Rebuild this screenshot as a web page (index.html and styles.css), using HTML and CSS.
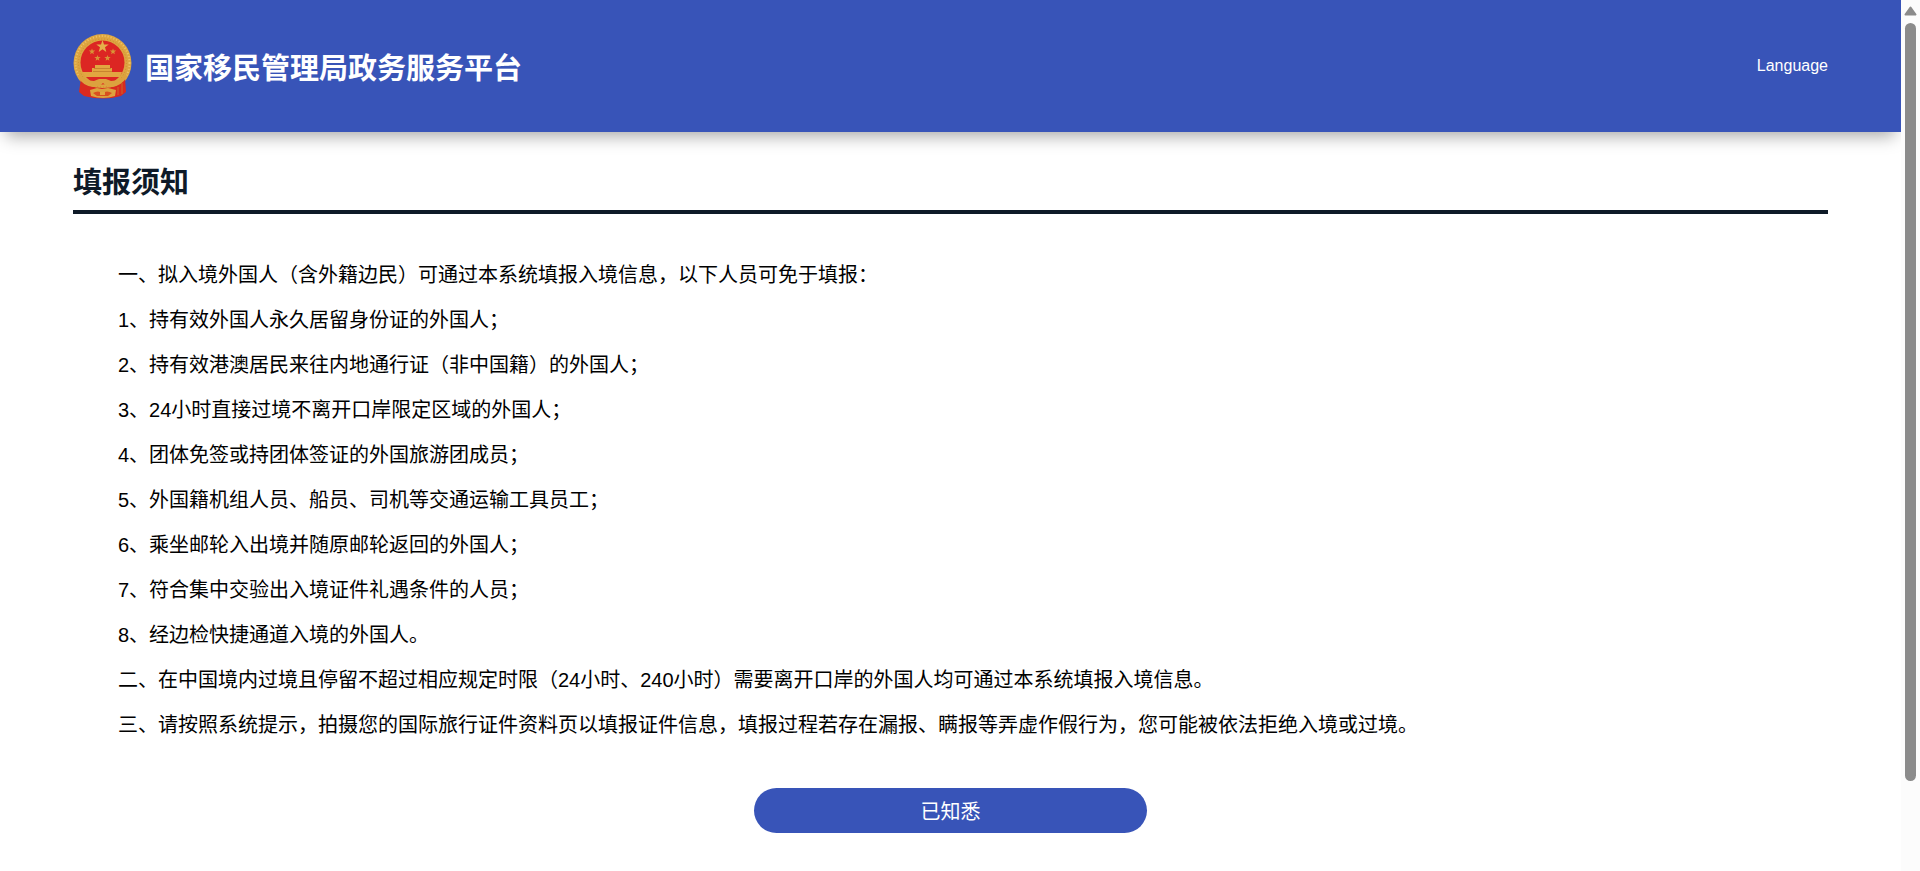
FILE: index.html
```html
<!DOCTYPE html>
<html lang="zh-CN">
  <head>
    <meta charset="UTF-8" />
    <meta name="viewport" content="width=device-width, initial-scale=1.0" />
    <title>国家移民管理局政务服务平台</title>
    <link rel="stylesheet" href="styles.css">
  </head>
  <body>
    <div class="page">
      <header class="header">
        <div class="brand">
          <svg class="emblem" viewBox="0 0 60 66" aria-hidden="true">
            <circle cx="29.500" cy="30" r="29" fill="#dda540"/>
            <circle cx="29.500" cy="30" r="27" fill="none" stroke="#efc568" stroke-width="2" stroke-dasharray="1 2"/>
            <circle cx="29.500" cy="30" r="24" fill="none" stroke="#cc8c30" stroke-width="1" stroke-dasharray="1 2"/>
            <path d="M8 45L6 59L11 63Q30 68 48 63L53 59L52 45Q45 55 30 55Q15 55 8 45Z" fill="#d92a1f"/>
            <path d="M45 54v8M49 50v11" stroke="#c9682a" stroke-width="1"/>
            <circle cx="29.500" cy="29.500" r="22" fill="#dc2623"/>
            <path d="M29.500 7l1.500 4.400h4.700l-3.700 2.900 1.300 4.700-3.800-2.800-3.800 2.800 1.300-4.700-3.700-2.900h4.700z" fill="#e5b04a"/>
            <path d="M19 15.500l.8 2h2.400l-1.900 1.500.6 2.300-1.900-1.300-1.900 1.300.6-2.300-1.900-1.500h2.400zM40 15.500l.8 2h2.400l-1.900 1.500.6 2.300-1.900-1.300-1.900 1.300.6-2.300-1.900-1.500h2.400zM24.500 22l.8 2h2.400l-1.900 1.500.6 2.300-1.900-1.300-1.900 1.300.6-2.300-1.900-1.500h2.400zM34.500 22l.8 2h2.400l-1.900 1.500.6 2.300-1.900-1.300-1.900 1.300.6-2.300-1.900-1.500h2.400z" fill="#d99436"/>
            <path d="M22 32h15v3h2v4h10l-2 5H12l-3-5h10v-4h3z" fill="#e2a640"/>
            <path d="M21 35.500h17M20 38.500h19" stroke="#c8842f" stroke-width="1"/>
            <path d="M6 40q5 8 15 8l5-2h7l5 2q10 0 15-8l1 4q-6 9-15 10-5 0-9-4-4 4-10 4-10-1-15-10z" fill="#dca23e"/>
            <path d="M17 57l7-2 5 1 6-1 8 2-1 6q-12 4-24 0z" fill="#dca23e"/>
            <path d="M20 60q5-3 9.500 0 4.500-3 9.500 0l-4 3h-11z" fill="#d9501f"/>
            <path d="M27 59h5v3h-5z" fill="#e2a640"/>
          </svg>
          <span class="brand-name">国家移民管理局政务服务平台</span>
        </div>
        <a class="language" href="#">Language</a>
      </header>
      <main class="content">
        <h1 class="title">填报须知</h1>
        <div class="notice">
          <p>一、拟入境外国人（含外籍边民）可通过本系统填报入境信息，以下人员可免于填报：</p>
          <p>1、持有效外国人永久居留身份证的外国人；</p>
          <p>2、持有效港澳居民来往内地通行证（非中国籍）的外国人；</p>
          <p>3、24小时直接过境不离开口岸限定区域的外国人；</p>
          <p>4、团体免签或持团体签证的外国旅游团成员；</p>
          <p>5、外国籍机组人员、船员、司机等交通运输工具员工；</p>
          <p>6、乘坐邮轮入出境并随原邮轮返回的外国人；</p>
          <p>7、符合集中交验出入境证件礼遇条件的人员；</p>
          <p>8、经边检快捷通道入境的外国人。</p>
          <p>二、在中国境内过境且停留不超过相应规定时限（24小时、240小时）需要离开口岸的外国人均可通过本系统填报入境信息。</p>
          <p>三、请按照系统提示，拍摄您的国际旅行证件资料页以填报证件信息，填报过程若存在漏报、瞒报等弄虚作假行为，您可能被依法拒绝入境或过境。</p>
        </div>
        <button class="confirm" type="button">已知悉</button>
      </main>
    </div>
    <div class="scrollbar" aria-hidden="true">
      <svg class="scroll-arrow" viewBox="0 0 13 10">
        <path d="M6.500 1.500L11.500 8.500H1.500Z" fill="#8b8b8b" stroke="#8b8b8b" stroke-width="2" stroke-linejoin="round"/>
      </svg>
      <div class="scroll-track">
        <div class="scroll-thumb"></div>
      </div>
    </div>
  </body>
</html>
```
FILE: styles.css
```css
* {
  box-sizing: border-box;
}
body {
  display: flex;
  height: 100vh;
  margin: 0;
  overflow: hidden;
  color: #000;
  background-color: #fff;
  font-family: "Liberation Sans", "Noto Sans CJK SC", sans-serif;
}
.page {
  flex: 1;
  min-width: 0;
  overflow: hidden;
}
.header {
  display: flex;
  align-items: center;
  justify-content: space-between;
  height: 132px;
  padding: 0 73px;
  background-color: #3854b8;
  box-shadow: 0 10px 16px -6px rgba(0, 0, 0, 0.35);
}
.brand {
  display: flex;
  align-items: center;
  gap: 12px;
}
.emblem {
  width: 60px;
  height: 66px;
}
.brand-name {
  color: #fff;
  font-size: 29px;
  font-weight: bold;
}
.language {
  color: #fff;
  font-size: 16px;
  text-decoration: none;
}
.content {
  padding: 29px 73px 38px;
}
.title {
  margin: 0;
  padding-bottom: 5px;
  border-bottom: 4px solid #0e1a28;
  color: #0e1a28;
  font-size: 29px;
  line-height: 44px;
}
.notice {
  padding: 39px 45px 40px;
  font-size: 20px;
  line-height: 45px;
}
.notice p {
  margin: 0;
}
.confirm {
  display: block;
  width: 393px;
  height: 45px;
  margin: 0 auto;
  border: none;
  border-radius: 23px;
  color: #fff;
  background-color: #3854b8;
  font-family: inherit;
  font-size: 20px;
  cursor: pointer;
}
.scrollbar {
  display: flex;
  flex-direction: column;
  align-items: center;
  width: 19px;
  padding: 6px 0;
  background-color: #fcfcfc;
}
.scroll-arrow {
  width: 13px;
  height: 10px;
}
.scroll-track {
  flex: 1;
  margin-top: 7px;
}
.scroll-thumb {
  width: 11px;
  height: 90%;
  border-radius: 6px;
  background-color: #8b8b8b;
}
```
